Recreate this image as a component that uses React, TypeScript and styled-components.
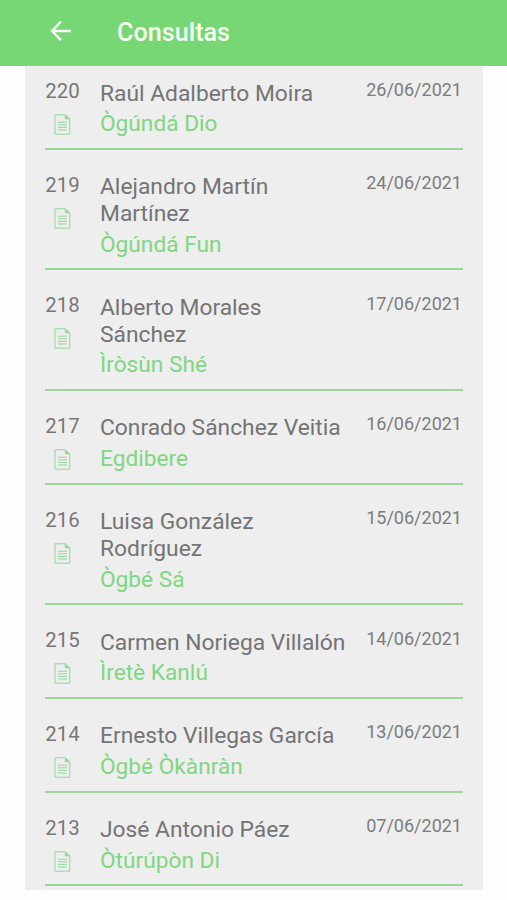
import React from 'react';
import styled, { createGlobalStyle } from 'styled-components';

const GlobalStyle = createGlobalStyle`
  * { box-sizing: border-box; }
  html, body { margin: 0; background: #fff; }
  body { font-family: Roboto, "Liberation Sans", sans-serif; overflow: hidden; }
`;

const Screen = styled.div`
  height: 900px;
  overflow: hidden;
  background: #fefefe;
`;

const AppBar = styled.header`
  position: relative;
  z-index: 1;
  display: flex;
  align-items: center;
  gap: 45px;
  height: 66px;
  padding: 0 50px 4px;
  background: #77d775;
`;

const BackButton = styled.button`
  display: flex;
  padding: 0;
  border: 0;
  background: none;
  color: #f6fff2;
`;

const Title = styled.h1`
  margin: 3px 0 0;
  color: #f6fff2;
  font-size: 25.2px;
  font-weight: 500;
  line-height: 30px;
`;

const List = styled.main`
  width: 458px;
  height: 834px;
  margin: -10px 0 0 25px;
  padding: 0 20px;
  background: #eeeeee;
`;

const Row = styled.article`
  display: grid;
  grid-template-columns: 55px 249px 1fr;
  padding: 24.7px 0 9.7px;
  border-bottom: 2px solid #9bd79d;
`;

const Marker = styled.div`
  display: flex;
  flex-direction: column;
  align-items: center;
  width: 35px;
  margin-top: -1.7px;
`;

const Num = styled.span`
  color: #777;
  font-size: 20.4px;
  line-height: 24px;
`;

const Name = styled.div`
  color: #747474;
  font-size: 22.8px;
  line-height: 26.7px;
`;

const Sign = styled.div`
  margin-top: 4px;
  color: #80d681;
  font-size: 22.7px;
  line-height: 26.7px;
`;

const DateText = styled.time`
  margin: -2px 1px 0 0;
  color: #7c7c7c;
  font-size: 18px;
  line-height: 21px;
  text-align: right;
  white-space: nowrap;
`;

const DocSvg = styled.svg`
  margin-top: 11px;
  color: #91d79a;
`;

const DocIcon = () => (
  <DocSvg width="17" height="21" viewBox="0 0 17 21" fill="none" stroke="currentColor">
    <path d="M1 .8h10.2L15.8 5v15.2H1z" />
    <path d="M11.2 .8V5h4.6z" fill="currentColor" strokeWidth=".5" />
    <path d="M4 8.2h9M4 10.8h9M4 13.4h9M4 16h9" />
  </DocSvg>
);

const entries = [
  { n: 220, name: 'Raúl Adalberto Moira', sign: 'Ògúndá Dio', date: '26/06/2021' },
  { n: 219, name: 'Alejandro Martín Martínez', sign: 'Ògúndá Fun', date: '24/06/2021' },
  { n: 218, name: 'Alberto Morales Sánchez', sign: 'Ìròsùn Shé', date: '17/06/2021' },
  { n: 217, name: 'Conrado Sánchez Veitia', sign: 'Egdibere', date: '16/06/2021' },
  { n: 216, name: 'Luisa González Rodríguez', sign: 'Ògbé Sá', date: '15/06/2021' },
  { n: 215, name: 'Carmen Noriega Villalón', sign: 'Ìretè Kanlú', date: '14/06/2021' },
  { n: 214, name: 'Ernesto Villegas García', sign: 'Ògbé Òkànràn', date: '13/06/2021' },
  { n: 213, name: 'José Antonio Páez', sign: 'Òtúrúpòn Di', date: '07/06/2021' },
];

export default function App() {
  return (
    <Screen>
      <GlobalStyle />
      <AppBar>
        <BackButton aria-label="Atrás">
          <svg width="22" height="22" viewBox="0 0 22 22" fill="none" stroke="currentColor" strokeWidth="2.4">
            <path d="M20.8 11H2.5M11 1.6L2 11l9 9.2" />
          </svg>
        </BackButton>
        <Title>Consultas</Title>
      </AppBar>
      <List>
        {entries.map((e) => (
          <Row key={e.n}>
            <Marker>
              <Num>{e.n}</Num>
              <DocIcon />
            </Marker>
            <div>
              <Name>{e.name}</Name>
              <Sign>{e.sign}</Sign>
            </div>
            <DateText>{e.date}</DateText>
          </Row>
        ))}
      </List>
    </Screen>
  );
}
